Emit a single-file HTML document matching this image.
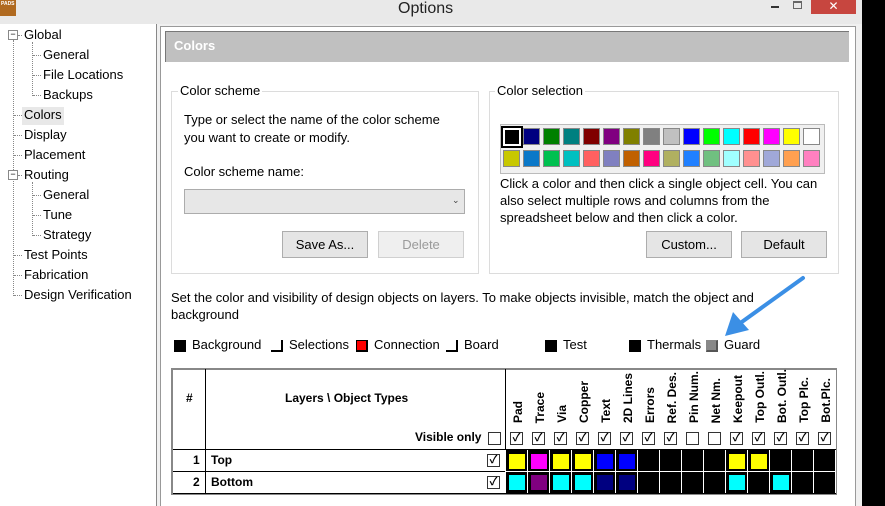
<!DOCTYPE html>
<html><head><style>
*{margin:0;padding:0;box-sizing:border-box}
body{width:885px;height:506px;overflow:hidden;background:#fff;font-family:"Liberation Sans","Noto Sans CJK SC",sans-serif;font-size:13px;color:#000;position:relative}
.a{position:absolute;white-space:nowrap}
.t{font-size:13px}
.cb{position:absolute;width:13px;height:13px;border:1px solid #333;background:#fff;font-size:11px;line-height:11px;text-align:center;font-weight:bold}
.btn{position:absolute;height:27px;border:1px solid #adadad;background:#e5e5e5;text-align:center;line-height:25px;font-size:13px}
.vh{position:absolute;writing-mode:vertical-rl;transform:rotate(180deg);font:bold 12px "Liberation Sans",sans-serif;white-space:nowrap;bottom:0}
.dot{position:absolute;border-left:1px dotted #888}
.doth{position:absolute;border-top:1px dotted #888;width:8px}
.sw{position:absolute;width:12px;height:12px;border:1px solid #000;border-right-width:2px;border-bottom-width:2px}
</style></head><body>
<!-- title bar -->
<div class="a" style="left:0;top:0;width:862px;height:24px;background:#e9e9e9"></div>
<div class="a" style="left:0;top:0;width:16px;height:16px;background:#b06a20"></div>
<div class="a" style="left:1px;top:1px;font-size:5px;color:#fff;font-weight:bold">PADS</div>
<div class="a" style="left:398px;top:0px;font-size:16px;color:#222">Options</div>
<div class="a" style="left:771px;top:6px;width:8px;height:2px;background:#333"></div>
<div class="a" style="left:793px;top:1px;width:9px;height:8px;border:1px solid #666;border-top-width:2px"></div>
<div class="a" style="left:811px;top:0;width:45px;height:14px;background:#c7463f;color:#fff;text-align:center;font-size:12px;line-height:13px">✕</div>
<div class="a" style="left:862px;top:0;width:23px;height:506px;background:#000"></div>
<!-- left tree -->
<div class="a" style="left:0;top:24px;width:157px;height:482px;background:#fff;border-right:1px solid #888"></div>
<div class="a" style="left:157px;top:24px;width:705px;height:482px;background:#f0f0f0"></div>
<div class="a" style="left:160px;top:26px;width:696px;height:480px;background:#fff;border:1px solid #999;border-bottom:none"></div>
<div class="dot" style="left:13px;top:40px;height:256px"></div>
<div class="dot" style="left:32px;top:42px;height:54px"></div>
<div class="dot" style="left:32px;top:182px;height:54px"></div>
<div class="a" style="left:8px;top:30px;width:10px;height:10px;border:1px solid #888;background:#fff;font-size:9px;line-height:7px;text-align:center">−</div>
<div class="a" style="left:8px;top:170px;width:10px;height:10px;border:1px solid #888;background:#fff;font-size:9px;line-height:7px;text-align:center">−</div>
<div class="doth" style="left:18px;top:35px;width:4px"></div>
<div class="doth" style="left:33px;top:55px"></div><div class="doth" style="left:33px;top:75px"></div><div class="doth" style="left:33px;top:95px"></div>
<div class="doth" style="left:14px;top:115px"></div><div class="doth" style="left:14px;top:135px"></div><div class="doth" style="left:14px;top:155px"></div>
<div class="doth" style="left:18px;top:175px;width:4px"></div>
<div class="doth" style="left:33px;top:195px"></div><div class="doth" style="left:33px;top:215px"></div><div class="doth" style="left:33px;top:235px"></div>
<div class="doth" style="left:14px;top:255px"></div><div class="doth" style="left:14px;top:275px"></div><div class="doth" style="left:14px;top:295px"></div>
<div class="a" style="left:22px;top:107px;width:42px;height:18px;background:#e8e8e8"></div>
<div class="a t" style="left:24px;top:27px">Global</div>
<div class="a t" style="left:43px;top:47px">General</div>
<div class="a t" style="left:43px;top:67px">File Locations</div>
<div class="a t" style="left:43px;top:87px">Backups</div>
<div class="a t" style="left:24px;top:107px">Colors</div>
<div class="a t" style="left:24px;top:127px">Display</div>
<div class="a t" style="left:24px;top:147px">Placement</div>
<div class="a t" style="left:24px;top:167px">Routing</div>
<div class="a t" style="left:43px;top:187px">General</div>
<div class="a t" style="left:43px;top:207px">Tune</div>
<div class="a t" style="left:43px;top:227px">Strategy</div>
<div class="a t" style="left:24px;top:247px">Test Points</div>
<div class="a t" style="left:24px;top:267px">Fabrication</div>
<div class="a t" style="left:24px;top:287px">Design Verification</div>
<!-- header -->
<div class="a" style="left:165px;top:31px;width:684px;height:31px;background:#c0c0c0;border-top:1px solid #777;border-left:1px solid #777"></div>
<div class="a" style="left:174px;top:38px;color:#fff;font-weight:bold;font-size:13px">Colors</div>
<!-- color scheme group -->
<div class="a" style="left:171px;top:91px;width:308px;height:183px;border:1px solid #dcdcdc"></div>
<div class="a t" style="left:178px;top:83px;background:#fff;padding:0 2px">Color scheme</div>
<div class="a t" style="left:184px;top:111px;line-height:18px">Type or select the name of the color scheme<br>you want to create or modify.</div>
<div class="a t" style="left:184px;top:164px">Color scheme name:</div>
<div class="a" style="left:184px;top:189px;width:281px;height:25px;background:#e7e7e7;border:1px solid #acacac"></div>
<div class="a" style="left:452px;top:195px;font-size:9px;color:#444">⌄</div>
<div class="btn" style="left:282px;top:231px;width:86px">Save As...</div>
<div class="btn" style="left:378px;top:231px;width:86px;color:#9a9a9a;background:#efefef;border-color:#d0d0d0">Delete</div>
<!-- color selection group -->
<div class="a" style="left:489px;top:91px;width:350px;height:183px;border:1px solid #dcdcdc"></div>
<div class="a t" style="left:495px;top:83px;background:#fff;padding:0 2px">Color selection</div>
<div class="a" style="left:500px;top:124px;width:325px;height:50px;background:#f0f0f0;border:1px solid #bbb"></div>
<div class="a" style="left:503px;top:128px;display:grid;grid-template-columns:repeat(16,20px);grid-row-gap:4px">
<span style="width:18px;height:18px;background:#000;outline:1px solid #000;border:2px solid #fff;box-shadow:0 0 0 2px #000"></span>
<span style="width:17px;height:17px;background:#000080;border:1px solid #888"></span>
<span style="width:17px;height:17px;background:#008000;border:1px solid #888"></span>
<span style="width:17px;height:17px;background:#008080;border:1px solid #888"></span>
<span style="width:17px;height:17px;background:#800000;border:1px solid #888"></span>
<span style="width:17px;height:17px;background:#800080;border:1px solid #888"></span>
<span style="width:17px;height:17px;background:#808000;border:1px solid #888"></span>
<span style="width:17px;height:17px;background:#808080;border:1px solid #888"></span>
<span style="width:17px;height:17px;background:#c0c0c0;border:1px solid #888"></span>
<span style="width:17px;height:17px;background:#0000ff;border:1px solid #888"></span>
<span style="width:17px;height:17px;background:#00ff00;border:1px solid #888"></span>
<span style="width:17px;height:17px;background:#00ffff;border:1px solid #888"></span>
<span style="width:17px;height:17px;background:#ff0000;border:1px solid #888"></span>
<span style="width:17px;height:17px;background:#ff00ff;border:1px solid #888"></span>
<span style="width:17px;height:17px;background:#ffff00;border:1px solid #888"></span>
<span style="width:17px;height:17px;background:#ffffff;border:1px solid #888"></span>
<span style="width:17px;height:17px;background:#c8c800;border:1px solid #888"></span>
<span style="width:17px;height:17px;background:#0a78c8;border:1px solid #888"></span>
<span style="width:17px;height:17px;background:#00c050;border:1px solid #888"></span>
<span style="width:17px;height:17px;background:#00c0c0;border:1px solid #888"></span>
<span style="width:17px;height:17px;background:#ff6060;border:1px solid #888"></span>
<span style="width:17px;height:17px;background:#8080c0;border:1px solid #888"></span>
<span style="width:17px;height:17px;background:#c06000;border:1px solid #888"></span>
<span style="width:17px;height:17px;background:#ff0080;border:1px solid #888"></span>
<span style="width:17px;height:17px;background:#b0b060;border:1px solid #888"></span>
<span style="width:17px;height:17px;background:#2080ff;border:1px solid #888"></span>
<span style="width:17px;height:17px;background:#70c080;border:1px solid #888"></span>
<span style="width:17px;height:17px;background:#a0ffff;border:1px solid #888"></span>
<span style="width:17px;height:17px;background:#ff9090;border:1px solid #888"></span>
<span style="width:17px;height:17px;background:#a0a8d8;border:1px solid #888"></span>
<span style="width:17px;height:17px;background:#ffa050;border:1px solid #888"></span>
<span style="width:17px;height:17px;background:#ff80c0;border:1px solid #888"></span>
</div>
<div class="a t" style="left:500px;top:175px;line-height:17px">Click a color and then click a single object cell. You can<br>also select multiple rows and columns from the<br>spreadsheet below and then click a color.</div>
<div class="btn" style="left:646px;top:231px;width:86px">Custom...</div>
<div class="btn" style="left:741px;top:231px;width:86px">Default</div>
<!-- instructions -->
<div class="a t" style="left:171px;top:289px;line-height:17px">Set the color and visibility of design objects on layers. To make objects invisible, match the object and<br>background</div>
<!-- legend -->
<div class="sw" style="left:174px;top:340px;background:#000"></div><div class="a t" style="left:192px;top:337px">Background</div>
<div class="sw" style="left:271px;top:340px;background:#fff;border-top:none;border-left:none"></div><div class="a t" style="left:289px;top:337px">Selections</div>
<div class="sw" style="left:356px;top:340px;background:#f00"></div><div class="a t" style="left:374px;top:337px">Connection</div>
<div class="sw" style="left:446px;top:340px;background:#fff;border-top:none;border-left:none"></div><div class="a t" style="left:464px;top:337px">Board</div>
<div class="sw" style="left:545px;top:340px;background:#000"></div><div class="a t" style="left:563px;top:337px">Test</div>
<div class="sw" style="left:629px;top:340px;background:#000"></div><div class="a t" style="left:647px;top:337px">Thermals</div>
<div class="sw" style="left:706px;top:340px;background:#888;border-color:#888 #555 #555 #888"></div><div class="a t" style="left:724px;top:337px">Guard</div>
<!-- arrow -->
<svg class="a" style="left:715px;top:272px" width="95" height="72"><line x1="88" y1="6" x2="24" y2="52" stroke="#3b8fe5" stroke-width="4" stroke-linecap="round"/><polygon points="10,64 18,40 34,58" fill="#3b8fe5"/></svg>
<!-- table -->
<div class="a" style="left:171px;top:368px;width:666px;height:127px;border:2px solid #888;border-right:1px solid #888;background:#fff"></div>
<div class="a" style="left:205px;top:369px;width:1px;height:125px;background:#000"></div>
<div class="a" style="left:505px;top:369px;width:1px;height:81px;background:#000"></div>
<div class="a" style="left:173px;top:449px;width:663px;height:1px;background:#000"></div>
<div class="a" style="left:173px;top:471px;width:332px;height:1px;background:#000"></div>
<div class="a" style="left:173px;top:493px;width:663px;height:1px;background:#000"></div>
<div class="a" style="left:186px;top:391px;font:bold 12px 'Liberation Sans',sans-serif">#</div>
<div class="a" style="left:285px;top:391px;font:bold 12px 'Liberation Sans',sans-serif">Layers \ Object Types</div>
<div class="a" style="left:415px;top:430px;font:bold 12px 'Liberation Sans',sans-serif">Visible only</div>
<div class="cb" style="left:488px;top:432px"></div>
<div class="a" style="left:193px;top:453px;font:bold 12px 'Liberation Sans',sans-serif">1</div>
<div class="a" style="left:211px;top:453px;font:bold 12px 'Liberation Sans',sans-serif">Top</div>
<div class="cb" style="left:487px;top:454px">✓</div>
<div class="a" style="left:193px;top:475px;font:bold 12px 'Liberation Sans',sans-serif">2</div>
<div class="a" style="left:211px;top:475px;font:bold 12px 'Liberation Sans',sans-serif">Bottom</div>
<div class="cb" style="left:487px;top:476px">✓</div>
<!-- column headers -->
<div class="a" style="left:506px;top:369px;width:330px;height:54px">
<div class="vh" style="left:5px">Pad</div><div class="vh" style="left:27px">Trace</div><div class="vh" style="left:49px">Via</div><div class="vh" style="left:71px">Copper</div><div class="vh" style="left:93px">Text</div><div class="vh" style="left:115px">2D Lines</div><div class="vh" style="left:137px">Errors</div><div class="vh" style="left:159px">Ref. Des.</div><div class="vh" style="left:181px">Pin Num.</div><div class="vh" style="left:203px">Net Nm.</div><div class="vh" style="left:225px">Keepout</div><div class="vh" style="left:247px">Top Outl.</div><div class="vh" style="left:269px">Bot. Outl.</div><div class="vh" style="left:291px">Top Plc.</div><div class="vh" style="left:313px">Bot.Plc.</div>
</div>
<div class="cb" style="left:510px;top:432px">✓</div><div class="cb" style="left:532px;top:432px">✓</div><div class="cb" style="left:554px;top:432px">✓</div><div class="cb" style="left:576px;top:432px">✓</div><div class="cb" style="left:598px;top:432px">✓</div><div class="cb" style="left:620px;top:432px">✓</div><div class="cb" style="left:642px;top:432px">✓</div><div class="cb" style="left:664px;top:432px">✓</div><div class="cb" style="left:686px;top:432px"></div><div class="cb" style="left:708px;top:432px"></div><div class="cb" style="left:730px;top:432px">✓</div><div class="cb" style="left:752px;top:432px">✓</div><div class="cb" style="left:774px;top:432px">✓</div><div class="cb" style="left:796px;top:432px">✓</div><div class="cb" style="left:818px;top:432px">✓</div>
<!-- color grid -->
<div class="a" style="left:506px;top:450px;width:330px;height:43px;background:#000;background-image:linear-gradient(90deg,#fff 1px,transparent 1px),linear-gradient(#fff 1px,transparent 1px);background-size:22px 22px;background-position:21px 0,0 21px"></div>
<div class="a" style="left:509px;top:454px;width:16px;height:15px;background:#ff0"></div>
<div class="a" style="left:531px;top:454px;width:16px;height:15px;background:#f0f"></div>
<div class="a" style="left:553px;top:454px;width:16px;height:15px;background:#ff0"></div>
<div class="a" style="left:575px;top:454px;width:16px;height:15px;background:#ff0"></div>
<div class="a" style="left:597px;top:454px;width:16px;height:15px;background:#00f"></div>
<div class="a" style="left:619px;top:454px;width:16px;height:15px;background:#00f"></div>
<div class="a" style="left:729px;top:454px;width:16px;height:15px;background:#ff0"></div>
<div class="a" style="left:751px;top:454px;width:16px;height:15px;background:#ff0"></div>
<div class="a" style="left:509px;top:475px;width:16px;height:15px;background:#0ff"></div>
<div class="a" style="left:531px;top:475px;width:16px;height:15px;background:#800080"></div>
<div class="a" style="left:553px;top:475px;width:16px;height:15px;background:#0ff"></div>
<div class="a" style="left:575px;top:475px;width:16px;height:15px;background:#0ff"></div>
<div class="a" style="left:597px;top:475px;width:16px;height:15px;background:#000080"></div>
<div class="a" style="left:619px;top:475px;width:16px;height:15px;background:#000080"></div>
<div class="a" style="left:729px;top:475px;width:16px;height:15px;background:#0ff"></div>
<div class="a" style="left:773px;top:475px;width:16px;height:15px;background:#0ff"></div>
</body></html>
